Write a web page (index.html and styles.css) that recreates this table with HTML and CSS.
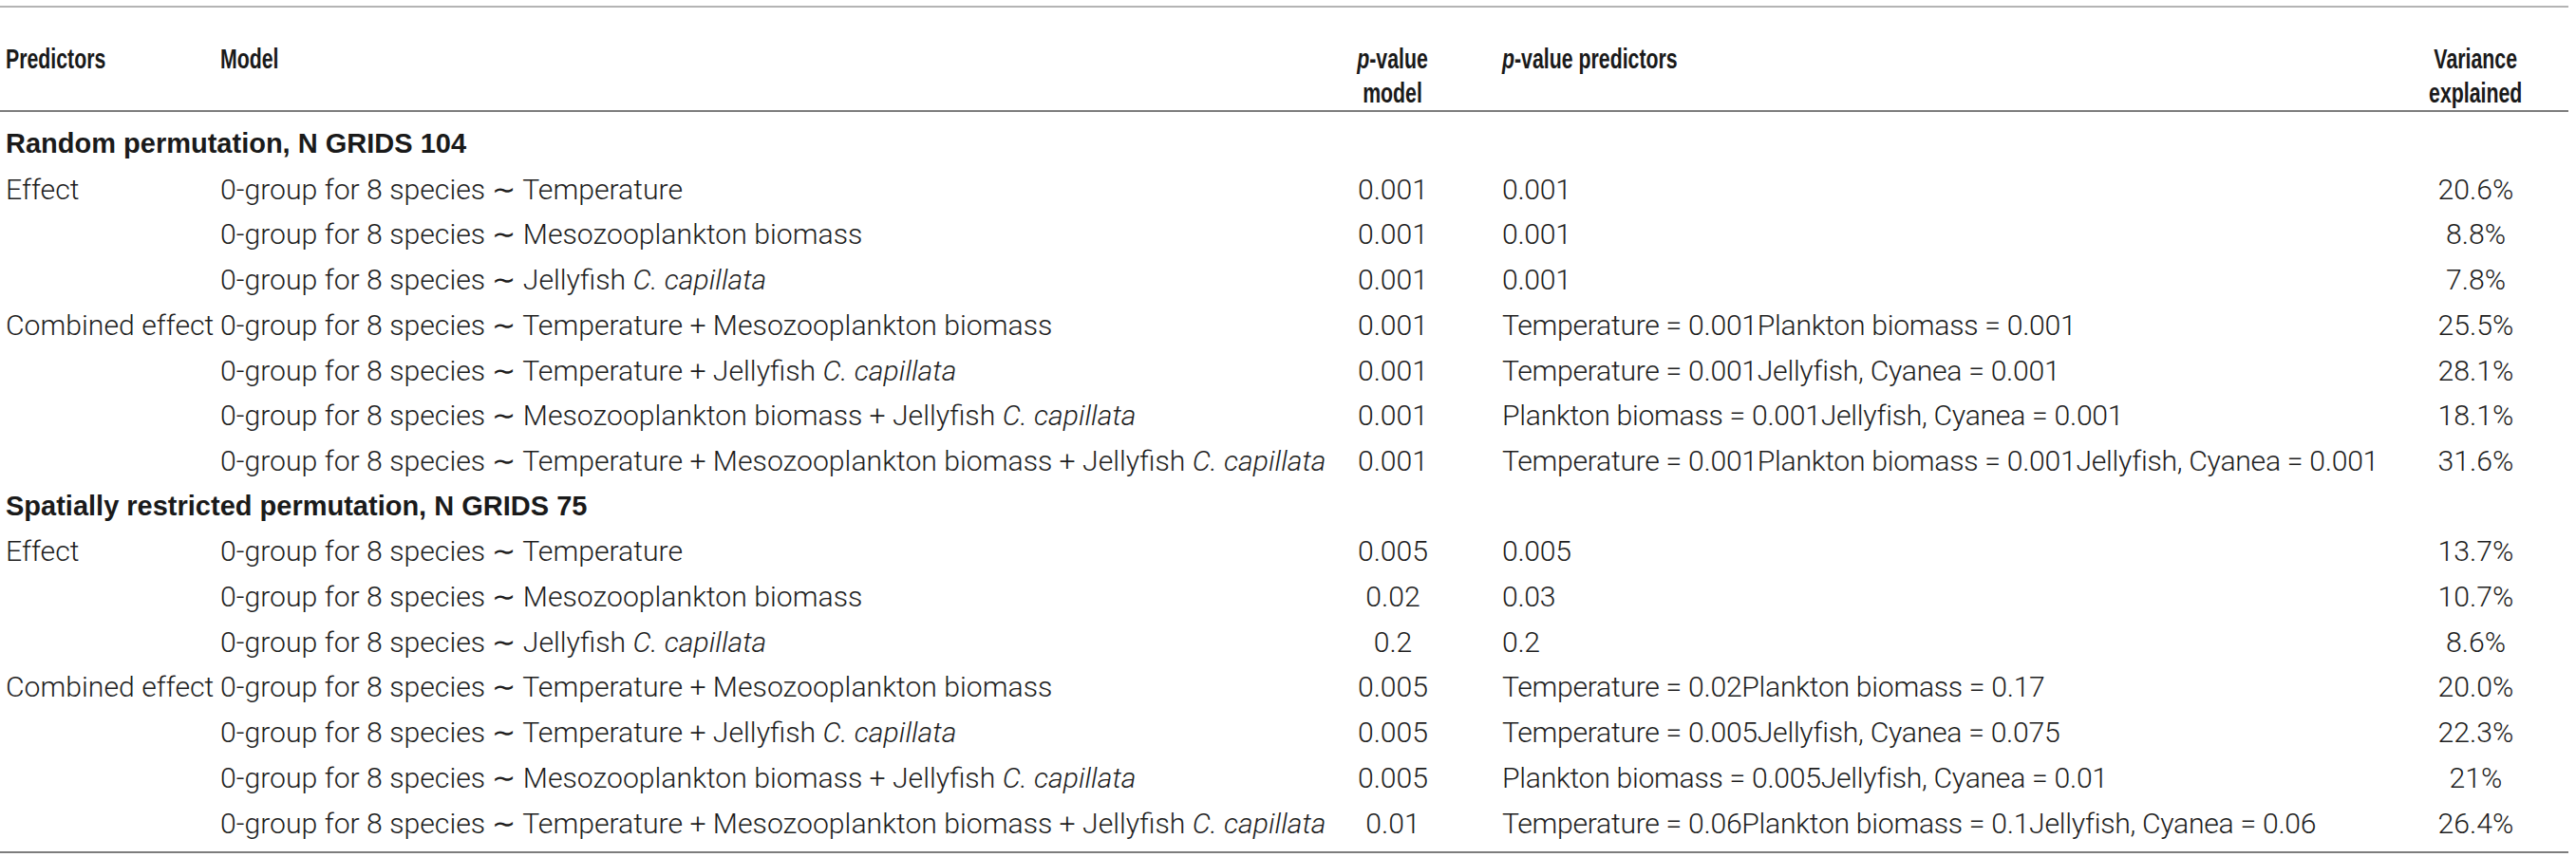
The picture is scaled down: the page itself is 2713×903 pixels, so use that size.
FILE: index.html
```html
<!DOCTYPE html>
<html lang="en">
<head>
<meta charset="utf-8">
<title>Permutation results</title>
<link rel="stylesheet" href="styles.css">
</head>
<body>
<table class="results">
  <colgroup>
    <col class="w-pred">
    <col class="w-model">
    <col class="w-pm">
    <col class="w-pp">
    <col class="w-var">
  </colgroup>
  <thead>
    <tr>
      <th><span class="hd">Predictors</span></th>
      <th><span class="hd">Model</span></th>
      <th class="center"><span class="hd"><i>p</i>-value<br>model</span></th>
      <th class="pp"><span class="hd"><i>p</i>-value predictors</span></th>
      <th class="center"><span class="hd">Variance<br>explained</span></th>
    </tr>
  </thead>
  <tbody>
    <tr class="section first"><td colspan="5">Random permutation, N GRIDS 104</td></tr>
    <tr><td>Effect</td><td>0-group for 8 species ∼ Temperature</td><td class="center">0.001</td><td class="pp">0.001</td><td class="center">20.6%</td></tr>
    <tr><td></td><td>0-group for 8 species ∼ Mesozooplankton biomass</td><td class="center">0.001</td><td class="pp">0.001</td><td class="center">8.8%</td></tr>
    <tr><td></td><td>0-group for 8 species ∼ Jellyfish <i>C. capillata</i></td><td class="center">0.001</td><td class="pp">0.001</td><td class="center">7.8%</td></tr>
    <tr><td>Combined effect</td><td>0-group for 8 species ∼ Temperature + Mesozooplankton biomass</td><td class="center">0.001</td><td class="pp">Temperature = 0.001Plankton biomass = 0.001</td><td class="center">25.5%</td></tr>
    <tr><td></td><td>0-group for 8 species ∼ Temperature + Jellyfish <i>C. capillata</i></td><td class="center">0.001</td><td class="pp">Temperature = 0.001Jellyfish, Cyanea = 0.001</td><td class="center">28.1%</td></tr>
    <tr><td></td><td>0-group for 8 species ∼ Mesozooplankton biomass + Jellyfish <i>C. capillata</i></td><td class="center">0.001</td><td class="pp">Plankton biomass = 0.001Jellyfish, Cyanea = 0.001</td><td class="center">18.1%</td></tr>
    <tr><td></td><td>0-group for 8 species ∼ Temperature + Mesozooplankton biomass + Jellyfish <i>C. capillata</i></td><td class="center">0.001</td><td class="pp">Temperature = 0.001Plankton biomass = 0.001Jellyfish, Cyanea = 0.001</td><td class="center">31.6%</td></tr>
    <tr class="section"><td colspan="5">Spatially restricted permutation, N GRIDS 75</td></tr>
    <tr><td>Effect</td><td>0-group for 8 species ∼ Temperature</td><td class="center">0.005</td><td class="pp">0.005</td><td class="center">13.7%</td></tr>
    <tr><td></td><td>0-group for 8 species ∼ Mesozooplankton biomass</td><td class="center">0.02</td><td class="pp">0.03</td><td class="center">10.7%</td></tr>
    <tr><td></td><td>0-group for 8 species ∼ Jellyfish <i>C. capillata</i></td><td class="center">0.2</td><td class="pp">0.2</td><td class="center">8.6%</td></tr>
    <tr><td>Combined effect</td><td>0-group for 8 species ∼ Temperature + Mesozooplankton biomass</td><td class="center">0.005</td><td class="pp">Temperature = 0.02Plankton biomass = 0.17</td><td class="center">20.0%</td></tr>
    <tr><td></td><td>0-group for 8 species ∼ Temperature + Jellyfish <i>C. capillata</i></td><td class="center">0.005</td><td class="pp">Temperature = 0.005Jellyfish, Cyanea = 0.075</td><td class="center">22.3%</td></tr>
    <tr><td></td><td>0-group for 8 species ∼ Mesozooplankton biomass + Jellyfish <i>C. capillata</i></td><td class="center">0.005</td><td class="pp">Plankton biomass = 0.005Jellyfish, Cyanea = 0.01</td><td class="center">21%</td></tr>
    <tr class="last"><td></td><td>0-group for 8 species ∼ Temperature + Mesozooplankton biomass + Jellyfish <i>C. capillata</i></td><td class="center">0.01</td><td class="pp">Temperature = 0.06Plankton biomass = 0.1Jellyfish, Cyanea = 0.06</td><td class="center">26.4%</td></tr>
  </tbody>
</table>
</body>
</html>
```

FILE: styles.css
```css
html, body {
  margin: 0;
  padding: 0;
  background: #ffffff;
}

body {
  font-family: Roboto, "Liberation Sans", Arial, sans-serif;
  font-weight: 300;
  color: #1e1e1e;
}

.results {
  border-collapse: collapse;
  table-layout: fixed;
  width: 2705px;
  margin-top: 6px;
  font-size: 30.2px;
}

.w-pred { width: 226px; }
.w-model { width: 1163px; }
.w-pm { width: 156px; }
.w-pp { width: 965px; }
.w-var { width: 195px; }

.results th {
  font-family: "Liberation Sans", Arial, sans-serif;
  font-weight: bold;
  font-size: 30px;
  text-align: left;
  vertical-align: top;
  line-height: 36px;
  padding: 36px 6px 0;
  border-top: 2px solid #b4b4b4;
  border-bottom: 2px solid #7d7d7d;
  color: #1a1a1a;
  white-space: nowrap;
}

/* condensed bold heading face */
.hd {
  display: inline-block;
  transform: scaleX(0.71);
  transform-origin: 0 50%;
}

.results th.center .hd {
  transform-origin: 50% 50%;
}

.results td {
  line-height: 47.7px;
  padding: 0 6px;
  white-space: nowrap;
  vertical-align: middle;
}

.results .center {
  text-align: center;
}

.results .pp {
  padding-left: 37px;
}

.results td.pp {
  letter-spacing: -0.3px;
}

.results .section td {
  font-family: "Liberation Sans", Arial, sans-serif;
  font-weight: bold;
  font-size: 29px;
  letter-spacing: 0;
  color: #1a1a1a;
}

.results .first td {
  padding-top: 10px;
}

.results .last td {
  padding-bottom: 6px;
  border-bottom: 2px solid #7d7d7d;
}
```
